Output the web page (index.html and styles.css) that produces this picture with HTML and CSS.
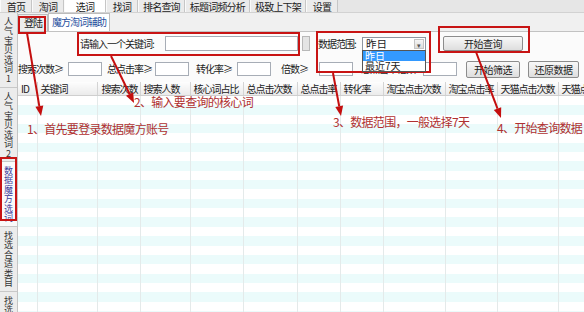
FILE: index.html
```html
<!DOCTYPE html>
<html lang="zh-CN">
<head>
  <meta charset="UTF-8" />
  <title>选词 - 魔方淘词辅助</title>
  <link rel="stylesheet" href="styles.css">
</head>
<body>
  <div class="topbar">
    <div class="tab">首页</div>
    <div class="tab">淘词</div>
    <div class="tab active">选词</div>
    <div class="tab">找词</div>
    <div class="tab">排名查询</div>
    <div class="tab">标题词频分析</div>
    <div class="tab">极致上下架</div>
    <div class="tab">设置</div>
  </div>

  <div class="layout">
    <div class="sidebar">
      <div class="vtab">人气宝贝选词1</div>
      <div class="vtab">人气宝贝选词2</div>
      <div class="vtab current">数据魔方选词</div>
      <div class="vtab">找选合适类目</div>
      <div class="vtab">找选</div>
    </div>

    <div class="content">
      <div class="subtabs">
        <div class="subtab">登陆</div>
        <div class="subtab active">魔方淘词辅助</div>
      </div>

      <div class="panel">
        <div class="row1">
          <span class="lbl lbl-key">请输入一个关键词:</span>
          <span class="input input-key"></span>
          <span class="spin"></span>
          <span class="lbl lbl-range">数据范围:</span>
          <div class="select">
            <span class="select-text">昨日</span>
            <span class="select-arrow">&#9662;</span>
            <div class="dropdown">
              <div class="option selected">昨日</div>
              <div class="option">最近7天</div>
            </div>
          </div>
          <button class="btn btn-query">开始查询</button>
        </div>

        <div class="row2">
          <span class="lbl lbl-f1">搜索次数≥</span>
          <span class="input input-s"></span>
          <span class="lbl lbl-f2">总点击率≥</span>
          <span class="input input-s"></span>
          <span class="lbl lbl-f3">转化率≥</span>
          <span class="input input-s"></span>
          <span class="lbl lbl-f4">倍数≥</span>
          <span class="input input-s"></span>
          <span class="lbl lbl-f5">总点击率倍数</span>
          <span class="input input-s"></span>
          <button class="btn btn-filter">开始筛选</button>
          <button class="btn btn-reset">还原数据</button>
        </div>

        <table class="grid">
          <colgroup>
            <col class="c-id"><col class="c-kw"><col class="c-43"><col class="c-50">
            <col class="c-53"><col class="c-54"><col class="c-43"><col class="c-43">
            <col class="c-62"><col class="c-52"><col class="c-61"><col class="c-last">
          </colgroup>
          <thead>
            <tr>
              <th>ID</th><th>关键词</th><th class="wide">搜索次数</th><th>搜索人数</th>
              <th>核心词占比</th><th>总点击次数</th><th>总点击率</th><th>转化率</th>
              <th>淘宝点击次数</th><th>淘宝点击率</th><th>天猫点击次数</th><th>天猫点击率</th>
            </tr>
          </thead>
          <tbody>
            <tr><td></td><td></td><td></td><td></td><td></td><td></td><td></td><td></td><td></td><td></td><td></td><td></td></tr>
            <tr><td></td><td></td><td></td><td></td><td></td><td></td><td></td><td></td><td></td><td></td><td></td><td></td></tr>
            <tr><td></td><td></td><td></td><td></td><td></td><td></td><td></td><td></td><td></td><td></td><td></td><td></td></tr>
            <tr><td></td><td></td><td></td><td></td><td></td><td></td><td></td><td></td><td></td><td></td><td></td><td></td></tr>
            <tr><td></td><td></td><td></td><td></td><td></td><td></td><td></td><td></td><td></td><td></td><td></td><td></td></tr>
            <tr><td></td><td></td><td></td><td></td><td></td><td></td><td></td><td></td><td></td><td></td><td></td><td></td></tr>
            <tr><td></td><td></td><td></td><td></td><td></td><td></td><td></td><td></td><td></td><td></td><td></td><td></td></tr>
            <tr><td></td><td></td><td></td><td></td><td></td><td></td><td></td><td></td><td></td><td></td><td></td><td></td></tr>
            <tr><td></td><td></td><td></td><td></td><td></td><td></td><td></td><td></td><td></td><td></td><td></td><td></td></tr>
            <tr><td></td><td></td><td></td><td></td><td></td><td></td><td></td><td></td><td></td><td></td><td></td><td></td></tr>
            <tr><td></td><td></td><td></td><td></td><td></td><td></td><td></td><td></td><td></td><td></td><td></td><td></td></tr>
            <tr><td></td><td></td><td></td><td></td><td></td><td></td><td></td><td></td><td></td><td></td><td></td><td></td></tr>
            <tr><td></td><td></td><td></td><td></td><td></td><td></td><td></td><td></td><td></td><td></td><td></td><td></td></tr>
            <tr><td></td><td></td><td></td><td></td><td></td><td></td><td></td><td></td><td></td><td></td><td></td><td></td></tr>
            <tr><td></td><td></td><td></td><td></td><td></td><td></td><td></td><td></td><td></td><td></td><td></td><td></td></tr>
            <tr><td></td><td></td><td></td><td></td><td></td><td></td><td></td><td></td><td></td><td></td><td></td><td></td></tr>
            <tr><td></td><td></td><td></td><td></td><td></td><td></td><td></td><td></td><td></td><td></td><td></td><td></td></tr>
            <tr><td></td><td></td><td></td><td></td><td></td><td></td><td></td><td></td><td></td><td></td><td></td><td></td></tr>
            <tr><td></td><td></td><td></td><td></td><td></td><td></td><td></td><td></td><td></td><td></td><td></td><td></td></tr>
            <tr><td></td><td></td><td></td><td></td><td></td><td></td><td></td><td></td><td></td><td></td><td></td><td></td></tr>
            <tr><td></td><td></td><td></td><td></td><td></td><td></td><td></td><td></td><td></td><td></td><td></td><td></td></tr>
            <tr><td></td><td></td><td></td><td></td><td></td><td></td><td></td><td></td><td></td><td></td><td></td><td></td></tr>
            <tr><td></td><td></td><td></td><td></td><td></td><td></td><td></td><td></td><td></td><td></td><td></td><td></td></tr>
            <tr><td></td><td></td><td></td><td></td><td></td><td></td><td></td><td></td><td></td><td></td><td></td><td></td></tr>
          </tbody>
        </table>
      </div>
    </div>
  </div>

  <!-- tutorial marks drawn over the screenshot -->
  <div class="mark mark-login"></div>
  <div class="mark mark-key"></div>
  <div class="mark mark-range"></div>
  <div class="mark mark-query"></div>
  <div class="mark mark-side"></div>

  <svg class="arrows" viewBox="0 0 584 312">
    <g stroke="#c40f0f" stroke-width="2" fill="none">
      <line x1="27" y1="33" x2="39.3" y2="106.1"/>
      <line x1="111" y1="56" x2="129.6" y2="94"/>
      <line x1="333" y1="73" x2="339.2" y2="106.2"/>
      <line x1="476" y1="52" x2="497.5" y2="108.6"/>
    </g>
    <g fill="#c40f0f">
      <polygon points="41,116 43.3,105.4 35.4,106.8"/>
      <polygon points="134,103 133.2,92.2 126,95.8"/>
      <polygon points="341,116 343.1,105.4 335.3,106.9"/>
      <polygon points="501,118 501.2,107.2 493.8,110"/>
    </g>
  </svg>

  <div class="note note-1">1、首先要登录数据魔方账号</div>
  <div class="note note-2">2、输入要查询的核心词</div>
  <div class="note note-3">3、数据范围，一般选择7天</div>
  <div class="note note-4">4、开始查询数据</div>
</body>
</html>
```

FILE: styles.css
```css
body {
  margin: 0;
  width: 584px;
  height: 312px;
  overflow: hidden;
  position: relative;
  background: #f0f0f0;
  font-family: "Noto Sans CJK SC", "Liberation Sans", sans-serif;
  font-size: 10px;
  color: #222;
}

/* top tab strip */
.topbar {
  display: flex;
  height: 13px;
  background: #e6e6e6;
  border-bottom: 1px solid #d2d2d2;
  box-sizing: border-box;
}

.tab {
  min-width: 32px;
  padding: 2px 4px 0;
  box-sizing: border-box;
  text-align: center;
  line-height: 10px;
  letter-spacing: -0.8px;
  background: #ebebeb;
  border-right: 1px solid #c6c6c6;
  border-left: 1px solid #fafafa;
}

.tab.active {
  min-width: 42px;
  background: #fff;
}

.layout {
  display: flex;
  height: 299px;
}

/* vertical tabs on the left */
.sidebar {
  width: 18px;
  flex: none;
  background: #ececec;
  border-right: 1px solid #c4c4c4;
  box-sizing: border-box;
}

.vtab {
  writing-mode: vertical-rl;
  text-orientation: upright;
  font-size: 9px;
  letter-spacing: 0.5px;
  line-height: 17px;
  padding: 4px 0 3px;
  border-bottom: 1px solid #c8c8c8;
  color: #333;
}

.vtab.current {
  background: #fafafa;
  color: #3c3c9a;
}

.content {
  flex: 1;
  display: flex;
  flex-direction: column;
  min-width: 0;
}

.subtabs {
  display: flex;
  align-items: flex-end;
  height: 19px;
}

.subtab {
  height: 17px;
  line-height: 16px;
  padding: 0 5px;
  border: 1px solid #bcbcbc;
  border-bottom: none;
  box-sizing: border-box;
  background: #ececec;
  letter-spacing: -1px;
}

.subtab.active {
  height: 18px;
  padding: 0 3px;
  background: #fff;
  color: #1f4f9e;
}

.panel {
  flex: 1;
  background: #fbfbfb;
  border-top: 1px solid #c2c2c2;
  padding-top: 3px;
}

/* form rows */
.row1 {
  display: flex;
  align-items: center;
  height: 17px;
  padding-left: 62px;
}

.row2 {
  display: flex;
  align-items: center;
  height: 18px;
  margin-top: 8px;
}

.lbl {
  flex: none;
  white-space: nowrap;
  letter-spacing: -1px;
  line-height: 14px;
}

.lbl-key { width: 85px; }
.lbl-range { width: 44px; margin-left: 8px; }
.lbl-f1 { width: 50px; }
.lbl-f2 { width: 48px; margin-left: 5px; }
.lbl-f3 { width: 41px; margin-left: 7px; }
.lbl-f4 { width: 38px; margin-left: 10px; }
.lbl-f5 { width: 62px; margin-left: 8px; }

.input {
  flex: none;
  height: 14px;
  background: #fff;
  border: 1px solid #a7adb6;
  box-sizing: border-box;
}

.input-key { width: 133px; height: 15px; }
.input-s { width: 34px; }

.spin {
  width: 8px;
  height: 15px;
  margin-left: 4px;
  background: #e4e4e4;
  border: 1px solid #b8b8b8;
  box-sizing: border-box;
}

.select {
  position: relative;
  width: 64px;
  height: 14px;
  background: #fff;
  border: 1px solid #8f96a0;
  box-sizing: border-box;
  display: flex;
  align-items: center;
}

.select-text {
  flex: 1;
  padding-left: 3px;
  font-size: 10.5px;
  line-height: 12px;
}

.select-arrow {
  width: 10px;
  height: 10px;
  margin-right: 1px;
  font-size: 7px;
  line-height: 10px;
  text-align: center;
  color: #555;
  background: linear-gradient(#f6f6f6, #dcdcdc);
  border: 1px solid #c4c4c4;
  box-sizing: border-box;
}

.dropdown {
  position: absolute;
  left: -1px;
  top: 12px;
  width: 64px;
  background: #fff;
  border: 1px solid #555;
  box-sizing: border-box;
  z-index: 2;
}

.option {
  height: 10px;
  line-height: 10px;
  padding-left: 2px;
  white-space: nowrap;
}

.option.selected {
  background: #3399ff;
  color: #fff;
}

.btn {
  flex: none;
  font-family: inherit;
  font-size: 10px;
  letter-spacing: -0.5px;
  color: #222;
  padding: 0;
  background: linear-gradient(#f8f8f8, #dedede);
  border: 1px solid #8c8c8c;
  border-radius: 2px;
  box-sizing: border-box;
}

.btn-query { width: 80px; height: 15px; margin-left: 17px; line-height: 12px; }
.btn-filter { width: 54px; height: 17px; margin-left: 9px; }
.btn-reset { width: 51px; height: 17px; margin-left: 8px; }

/* data grid */
.grid {
  margin-top: 4px;
  width: 566px;
  table-layout: fixed;
  border-collapse: collapse;
  background: #fff;
}

.c-id { width: 19px; }
.c-kw { width: 60px; }
.c-43 { width: 43px; }
.c-50 { width: 50px; }
.c-53 { width: 53px; }
.c-54 { width: 54px; }
.c-62 { width: 62px; }
.c-52 { width: 52px; }
.c-61 { width: 61px; }
.c-last { width: 26px; }

.grid th {
  height: 13px;
  padding: 0 0 0 3px;
  text-align: left;
  font-weight: normal;
  white-space: nowrap;
  overflow: hidden;
  letter-spacing: -1px;
  line-height: 12px;
  background: linear-gradient(#fdfdfd, #ebebeb);
  border-right: 1px solid #d4d4d4;
  border-bottom: 1px solid #cfcfcf;
}

.grid th.wide {
  padding-left: 4px;
}

.grid td {
  height: 9.35px;
  padding: 0;
  border-right: 1px solid #e4eaea;
}

.grid tbody tr:nth-child(even) td {
  background: #ebfbfb;
}

/* red tutorial boxes, arrows and captions */
.mark {
  position: absolute;
  border: 2px solid #c81414;
  box-sizing: border-box;
}

.mark-login { left: 18px; top: 16px; width: 28px; height: 18px; }
.mark-key { left: 77px; top: 32px; width: 223px; height: 24px; }
.mark-range { left: 316px; top: 31px; width: 115px; height: 42px; }
.mark-query { left: 438px; top: 26px; width: 92px; height: 27px; }
.mark-side { left: 0; top: 157px; width: 17px; height: 64px; }

.arrows {
  position: absolute;
  left: 0;
  top: 0;
  width: 584px;
  height: 312px;
  pointer-events: none;
}

.note {
  position: absolute;
  color: #b03030;
  font-size: 12px;
  line-height: 12px;
  letter-spacing: -0.7px;
  white-space: nowrap;
}

.note-1 { left: 27px; top: 123px; }
.note-2 { left: 134px; top: 96px; }
.note-3 { left: 333px; top: 116px; }
.note-4 { left: 497px; top: 122px; }
```
